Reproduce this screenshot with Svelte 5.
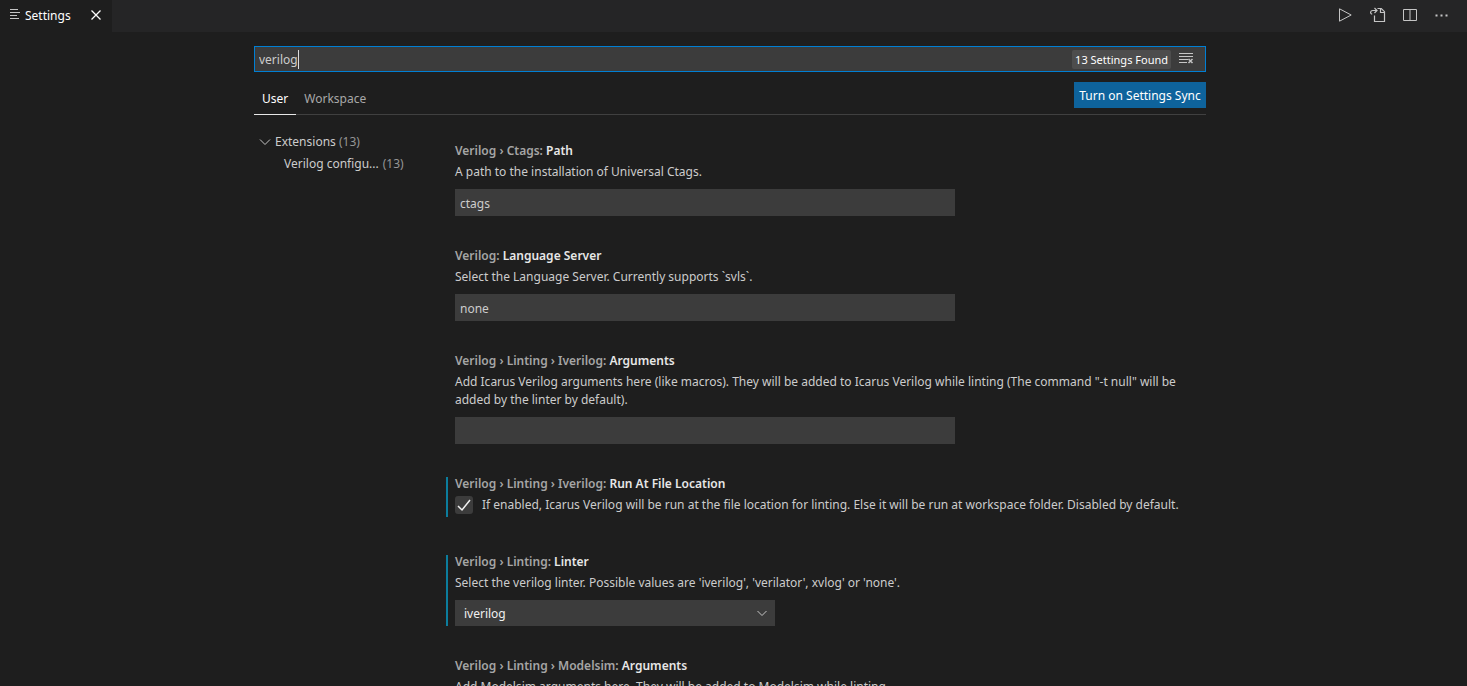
<script>
  let query = $state('verilog');

  const settings = [
    { id: 'ctags-path', scope: 'Verilog › Ctags:', name: 'Path', text: 'A path to the installation of Universal Ctags.', kind: 'text', value: 'ctags' },
    { id: 'language-server', scope: 'Verilog:', name: 'Language Server', text: 'Select the Language Server. Currently supports `svls`.', kind: 'text', value: 'none' },
    { id: 'iverilog-arguments', scope: 'Verilog › Linting › Iverilog:', name: 'Arguments', text: 'Add Icarus Verilog arguments here (like macros). They will be added to Icarus Verilog while linting (The command "-t null" will be added by the linter by default).', kind: 'text', value: '' },
    { id: 'run-at-file', scope: 'Verilog › Linting › Iverilog:', name: 'Run At File Location', text: 'If enabled, Icarus Verilog will be run at the file location for linting. Else it will be run at workspace folder. Disabled by default.', kind: 'check', modified: true },
    { id: 'linter', scope: 'Verilog › Linting:', name: 'Linter', text: "Select the verilog linter. Possible values are 'iverilog', 'verilator', xvlog' or 'none'.", kind: 'select', value: 'iverilog', modified: true },
    { id: 'modelsim-arguments', scope: 'Verilog › Linting › Modelsim:', name: 'Arguments', text: 'Add Modelsim arguments here. They will be added to Modelsim while linting.', kind: 'text', value: '' }
  ];
</script>

<div class="editor">
  <header class="titlebar">
    <div class="tab">
      <svg class="file-icon" width="10" height="10" viewBox="0 0 10 10" aria-hidden="true">
        <path d="M0 .5h8M0 3.5h10M0 6.5h7M0 9.5h9" />
      </svg>
      <span>Settings</span>
      <button class="icon close" aria-label="Close">
        <svg width="16" height="16" viewBox="0 0 16 16"><path d="M3.5 3.5l9 9M12.5 3.5l-9 9" /></svg>
      </button>
    </div>
    <div class="actions">
      <button class="icon" aria-label="Run">
        <svg width="16" height="16" viewBox="0 0 16 16"><path d="M1.5 1.8v12.4L13.2 8z" /></svg>
      </button>
      <button class="icon" aria-label="Open Settings (JSON)">
        <svg class="goto" width="16" height="16" viewBox="0 0 16 16">
          <path d="M4.5 8.5v6h10V4.7L11.3 1.5H7.5M10.5 1.5v4h4M2.2 7.3C-.2 6.5 .2 3.5 2.8 3.5H6.5M4.5 1l2.500 2.500L4.500 6" />
        </svg>
      </button>
      <button class="icon" aria-label="Split Editor">
        <svg width="16" height="16" viewBox="0 0 16 16"><path d="M1.5 2.5h13v11h-13zM8 2.5v11" /></svg>
      </button>
      <button class="icon" aria-label="More Actions">
        <svg class="dots" width="16" height="16" viewBox="0 0 16 16">
          <path d="M1.5 7.5h2v2h-2zM6.5 7.5h2v2h-2zM11.5 7.5h2v2h-2z" />
        </svg>
      </button>
    </div>
  </header>

  <main class="settings">
    <div class="search">
      <div class="field">
        <input aria-label="Search settings" spellcheck="false" bind:value={query} />
        <span class="caret"></span>
      </div>
      <span class="count">13 Settings Found</span>
      <button class="icon clear" aria-label="Clear Settings Search Input">
        <svg width="16" height="14" viewBox="0 0 16 14">
          <path d="M0 1.5h14M0 4.5h14M0 7.5h9M0 10.5h8" />
          <path class="cross" d="M9.5 7l4 4M13.5 7l-4 4" />
        </svg>
      </button>
    </div>

    <div class="scopes">
      <nav>
        <button class="scope active">User</button>
        <button class="scope">Workspace</button>
      </nav>
      <button class="sync">Turn on Settings Sync</button>
    </div>

    <div class="body">
      <aside>
        <button class="node">
          <svg width="12" height="12" viewBox="0 0 12 12" aria-hidden="true"><path d="M1 3.5l5 5 5-5" /></svg>
          <span>Extensions <i>(13)</i></span>
        </button>
        <button class="node child">Verilog configu... <i>(13)</i></button>
      </aside>

      <section class="list">
        {#each settings as s (s.id)}
          <div class="item">
            <div class="content {s.kind}" class:modified={s.modified}>
              <label class="title" for={s.id}>{s.scope} <b>{s.name}</b></label>
              {#if s.kind === 'check'}
                <div class="check-row">
                  <span class="box">
                    <input id={s.id} type="checkbox" checked />
                    <svg width="16" height="16" viewBox="0 0 16 16" aria-hidden="true"><path d="M2 9l4 4 8-10" /></svg>
                  </span>
                  <p>{s.text}</p>
                </div>
              {:else}
                <p>{s.text}</p>
                {#if s.kind === 'select'}
                  <div class="dropdown">
                    <select id={s.id}>
                      <option>{s.value}</option>
                    </select>
                    <svg width="12" height="12" viewBox="0 0 12 12" aria-hidden="true"><path d="M1.5 4l4.5 4.5L10.5 4" /></svg>
                  </div>
                {:else}
                  <input class="text-input" id={s.id} type="text" value={s.value} />
                {/if}
              {/if}
            </div>
          </div>
        {/each}
      </section>
    </div>
  </main>
</div>

<style>
  :global(body) {
    margin: 0;
    background: #1e1e1e;
  }
  .editor {
    box-sizing: border-box;
    height: 100vh;
    overflow: hidden;
    color: #ccc;
    font: 12px/18px 'Noto Sans', 'Open Sans', sans-serif;
  }
  .editor * {
    box-sizing: border-box;
  }
  button,
  input,
  select {
    margin: 0;
    padding: 0;
    border: 0;
    border-radius: 0;
    outline: 0;
    background: none;
    color: inherit;
    font: inherit;
  }
  svg {
    display: block;
    flex: none;
    fill: none;
    stroke: #c5c5c5;
  }
  .titlebar {
    display: flex;
    justify-content: space-between;
    height: 32px;
    background: #252526;
  }
  .tab {
    display: flex;
    align-items: center;
    width: 112px;
    padding: 0 8px 2px 10px;
    background: #1e1e1e;
    color: #fff;
  }
  .tab span {
    padding-top: 2px;
    margin-left: 5px;
  }
  .file-icon {
    margin-bottom: 2px;
  }
  .icon {
    display: flex;
  }
  .close {
    margin-left: auto;
  }
  .close svg {
    stroke: #fff;
    stroke-width: 1.3;
  }
  .actions {
    display: flex;
    align-items: center;
    gap: 16px;
    padding: 0 17px 2px 0;
  }
  .goto {
    stroke-width: 1.2;
  }
  .dots {
    fill: #c5c5c5;
    stroke: none;
  }
  .settings {
    display: flex;
    flex-direction: column;
    padding: 14px 31px 0 24px;
  }
  .settings > * {
    width: 100%;
    max-width: 952px;
    margin: 0 auto;
  }
  .search {
    display: flex;
    align-items: center;
    height: 26px;
    padding: 0 10px 0 4px;
    border: 1px solid #007fd4;
    background: #3c3c3c;
  }
  .field {
    position: relative;
    flex: 1;
  }
  .field input {
    display: block;
    width: 100%;
    height: 24px;
    caret-color: transparent;
  }
  .caret {
    position: absolute;
    top: 3px;
    left: 39px;
    width: 1px;
    height: 19px;
    background: #ddd;
  }
  .count {
    padding: 0 3px;
    border-radius: 2px;
    background: #4d4d4d;
    color: #fff;
    font-size: 11px;
    line-height: 19px;
  }
  .clear {
    margin-left: 8px;
  }
  .clear .cross {
    stroke-width: 1.5;
  }
  .scopes {
    display: flex;
    justify-content: space-between;
    align-items: flex-start;
    height: 43px;
    padding-top: 10px;
    border-bottom: 1px solid #404040;
  }
  nav {
    display: flex;
  }
  .scope {
    height: 33px;
    padding: 2px 8px 0;
    border-bottom: 1px solid transparent;
    color: #a8a8a8;
  }
  .scope.active {
    border-color: #e7e7e7;
    color: #fff;
  }
  .sync {
    min-width: 132px;
    height: 26px;
    padding: 2px 4px 0;
    background: #0e639c;
    color: #fff;
  }
  .body {
    display: grid;
    grid-template-columns: 201px minmax(0, 1fr);
    padding-top: 14px;
  }
  aside {
    padding-top: 2px;
  }
  .node {
    display: flex;
    align-items: center;
    gap: 4px;
    height: 22px;
    padding-left: 5px;
  }
  .node.child {
    padding-left: 30px;
  }
  .node i {
    color: #959595;
    font-style: normal;
  }
  .item {
    padding: 13px 10px 18px 0;
  }
  .content {
    position: relative;
    display: flex;
    flex-direction: column;
    align-items: flex-start;
  }
  .check {
    padding-bottom: 8px;
  }
  .modified::before {
    content: '';
    position: absolute;
    top: 2px;
    bottom: 0;
    left: -9px;
    width: 2px;
    background: #0c7d9d;
  }
  .check.modified::before {
    bottom: 5px;
  }
  .title {
    margin-bottom: 3px;
    color: #a5a5a5;
    font-weight: 600;
  }
  .title b {
    color: #e7e7e7;
    font-weight: 600;
  }
  p {
    margin: 0;
  }
  .text-input {
    width: 500px;
    max-width: 100%;
    height: 27px;
    margin-top: 8px;
    padding: 2px 5px 0;
    background: #3c3c3c;
  }
  .check-row {
    display: flex;
    gap: 9px;
  }
  .box {
    display: grid;
    flex: none;
    place-items: center;
    width: 18px;
    height: 18px;
  }
  .box > * {
    grid-area: 1 / 1;
  }
  .box input {
    width: 18px;
    height: 18px;
    appearance: none;
    border-radius: 3px;
    background: #3c3c3c;
  }
  .box svg {
    pointer-events: none;
    stroke: #f0f0f0;
    stroke-width: 1.5;
  }
  .dropdown {
    display: grid;
    align-items: center;
    width: 320px;
    margin-top: 8px;
  }
  .dropdown > * {
    grid-area: 1 / 1;
  }
  .dropdown select {
    height: 26px;
    padding: 2px 9px 0;
    appearance: none;
    background: #3c3c3c;
    color: #f0f0f0;
  }
  .dropdown svg {
    justify-self: end;
    margin-right: 7px;
    pointer-events: none;
  }
</style>
